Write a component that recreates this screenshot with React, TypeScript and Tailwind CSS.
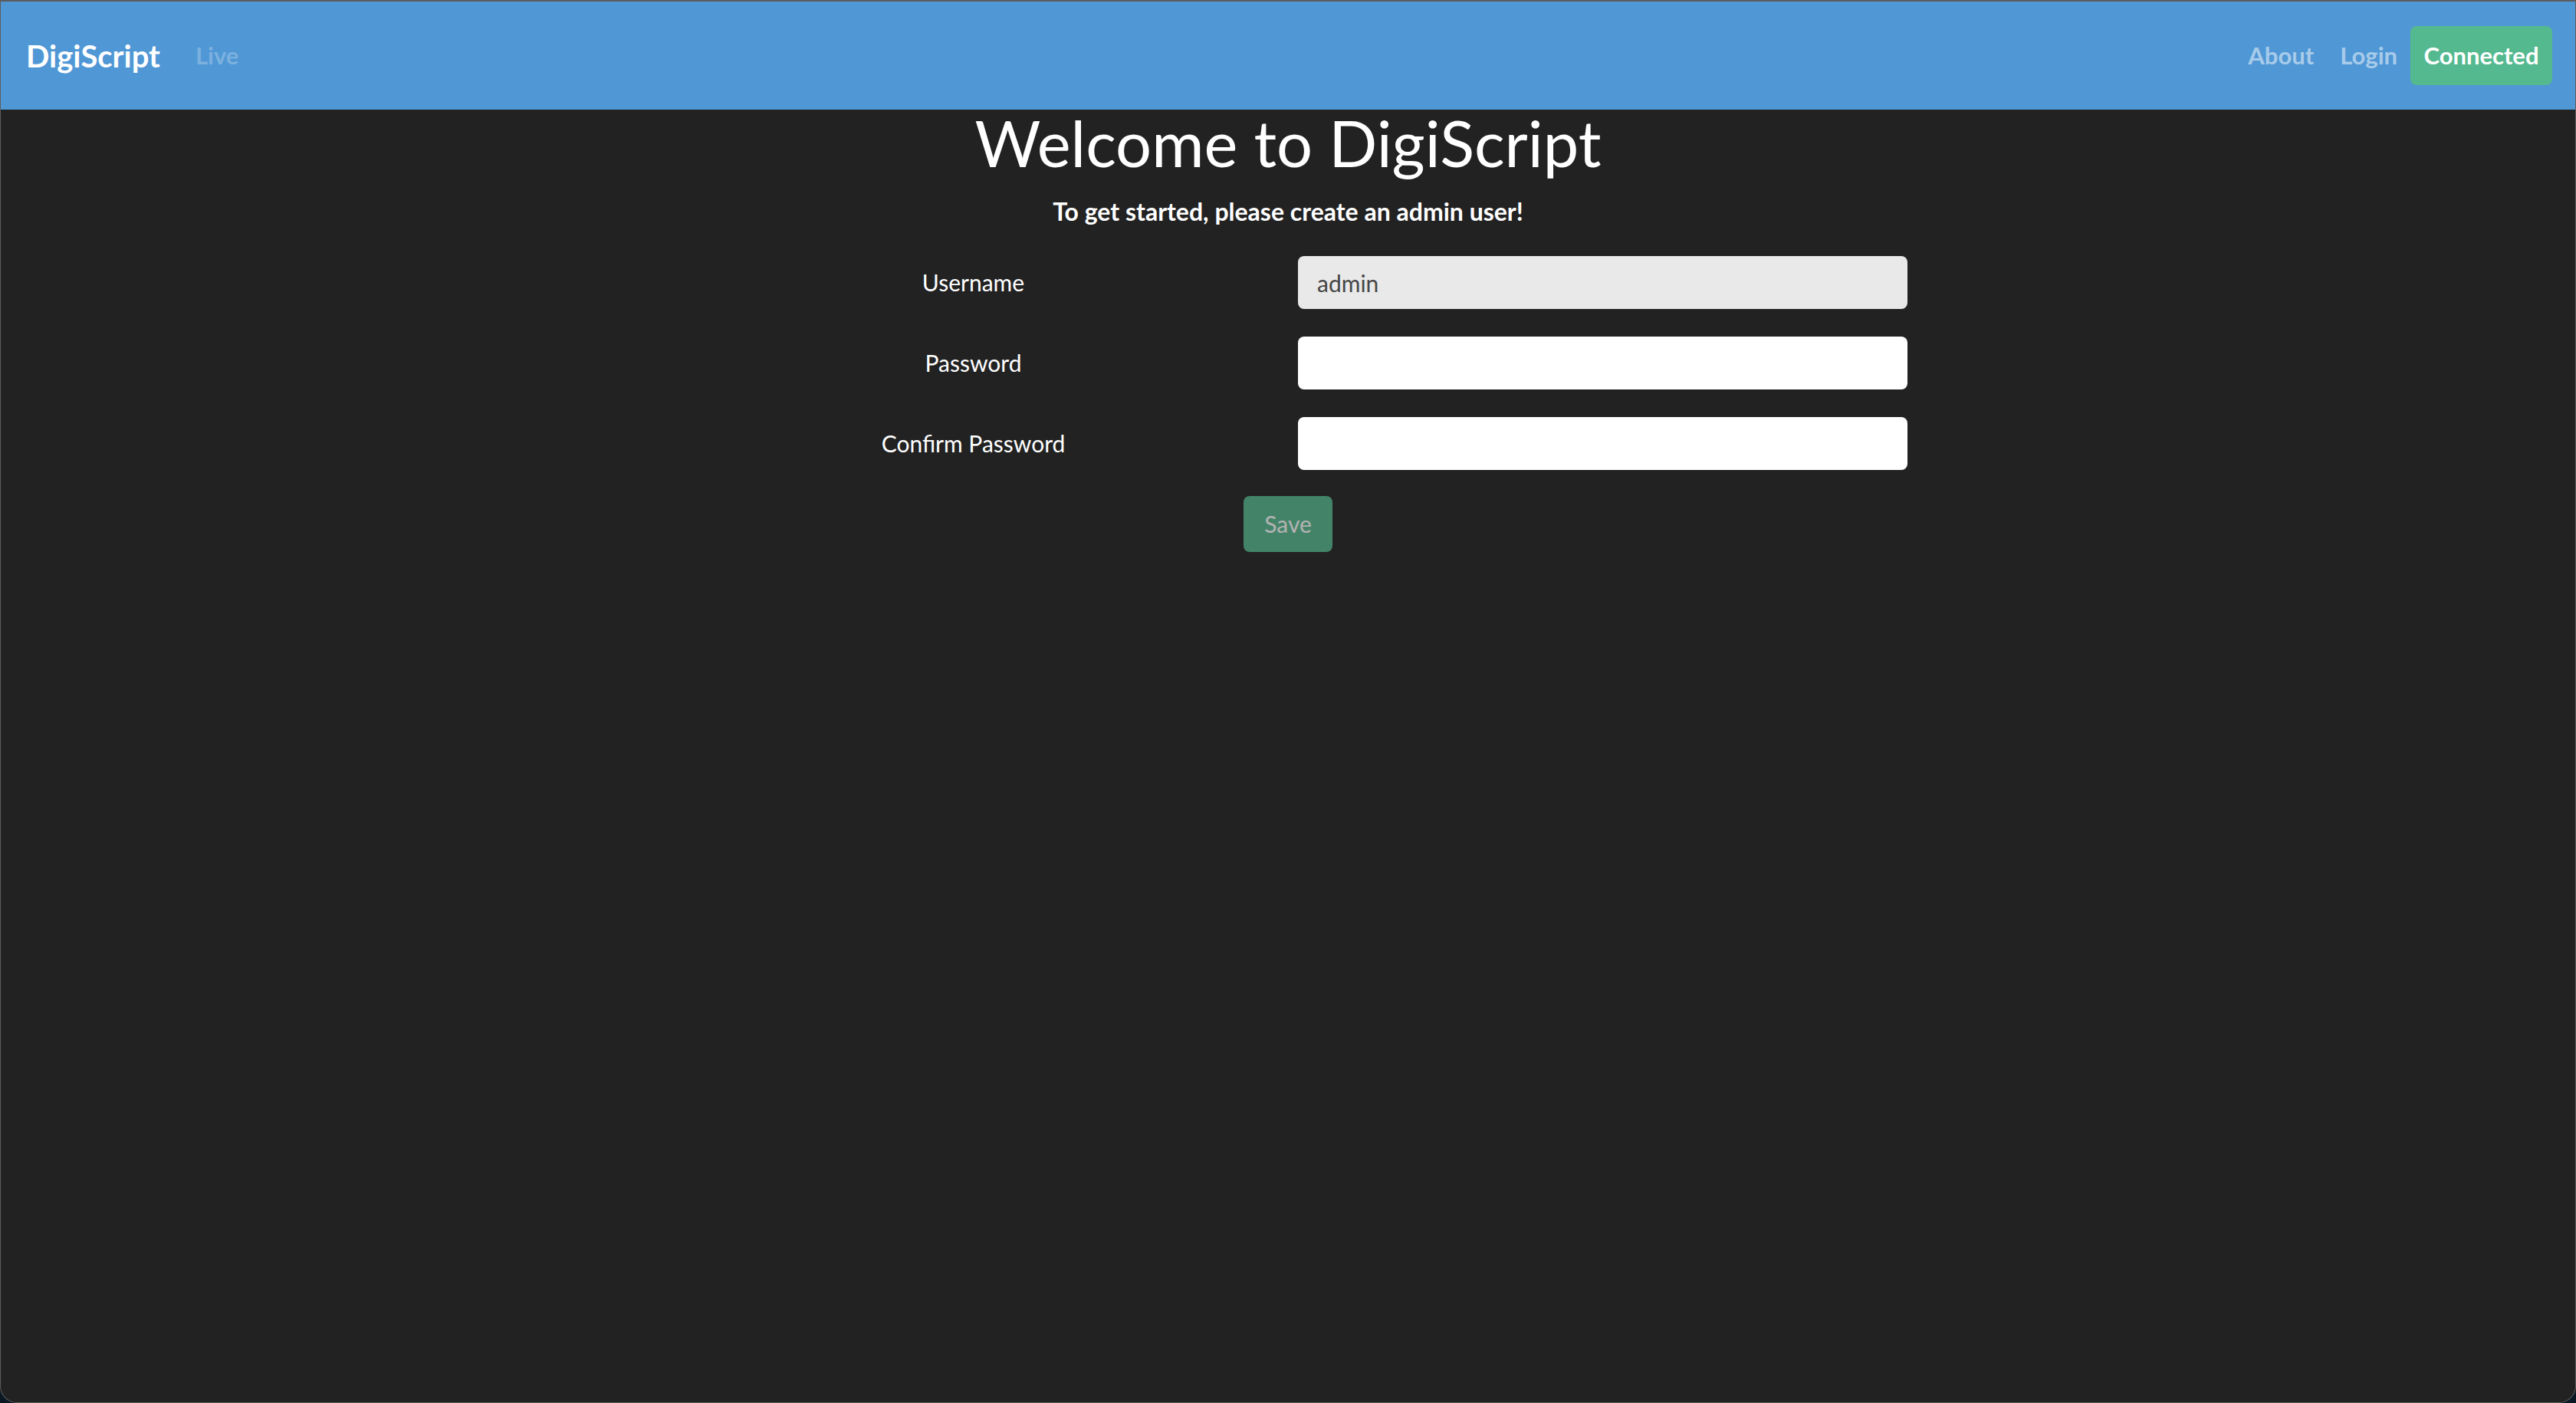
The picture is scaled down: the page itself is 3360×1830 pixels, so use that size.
import { useState } from "react";

const font = { fontFamily: "Lato, 'Noto Sans', sans-serif" };

function NavBar() {
  return (
    <nav className="flex h-[141px] shrink-0 items-center bg-[#5097d5] pl-[33px] pr-[30px]">
      <span className="mr-[30px] text-[40px] font-bold text-white">DigiScript</span>
      <span className="px-4 text-[31px] font-bold text-white/25">Live</span>
      <div className="ml-auto flex items-center">
        <a className="px-[17px] text-[31px] font-bold text-white/50">About</a>
        <a className="px-[17px] text-[31px] font-bold text-white/50">Login</a>
        <button className="h-[77px] w-[185px] rounded-[8px] bg-[#55b98f] text-[31px] font-bold text-white">
          Connected
        </button>
      </div>
    </nav>
  );
}

function Field({ label, value, disabled }: { label: string; value?: string; disabled?: boolean }) {
  return (
    <>
      <label className="flex items-center justify-center text-[30px] text-white">{label}</label>
      <input
        className={`h-[69px] w-full rounded-[8px] px-[25px] text-[30px] text-[#464646] outline-none ${
          disabled ? "bg-[#e9e9e9]" : "bg-white"
        }`}
        style={font}
        defaultValue={value}
        disabled={disabled}
        type={disabled ? "text" : "password"}
      />
    </>
  );
}

export default function App() {
  const [saving] = useState(false);

  return (
    <div className="h-[1830px] w-[3360px] bg-[#0b1722]" style={font}>
      <div className="flex h-full flex-col overflow-hidden rounded-b-[22px] border border-t-2 border-[#5c5c5c] bg-[#222222]">
        <NavBar />

        <main className="flex flex-col items-center">
          <h1 className="mt-[2px] text-[83px] font-normal leading-[82px] text-white">Welcome to DigiScript</h1>
          <p className="mt-[28px] text-[32px] font-bold leading-[42px] text-white">
            To get started, please create an admin user!
          </p>

          <form className="mt-[37px] grid w-[1616px] grid-cols-2 gap-x-[26px] gap-y-[36px]">
            <Field label="Username" value="admin" disabled />
            <Field label="Password" />
            <Field label="Confirm Password" />
          </form>

          <button
            disabled={!saving}
            className="mt-[34px] h-[73px] w-[116px] rounded-[8px] bg-[#55b98f] text-[30px] text-white opacity-65"
          >
            Save
          </button>
        </main>
      </div>
    </div>
  );
}
